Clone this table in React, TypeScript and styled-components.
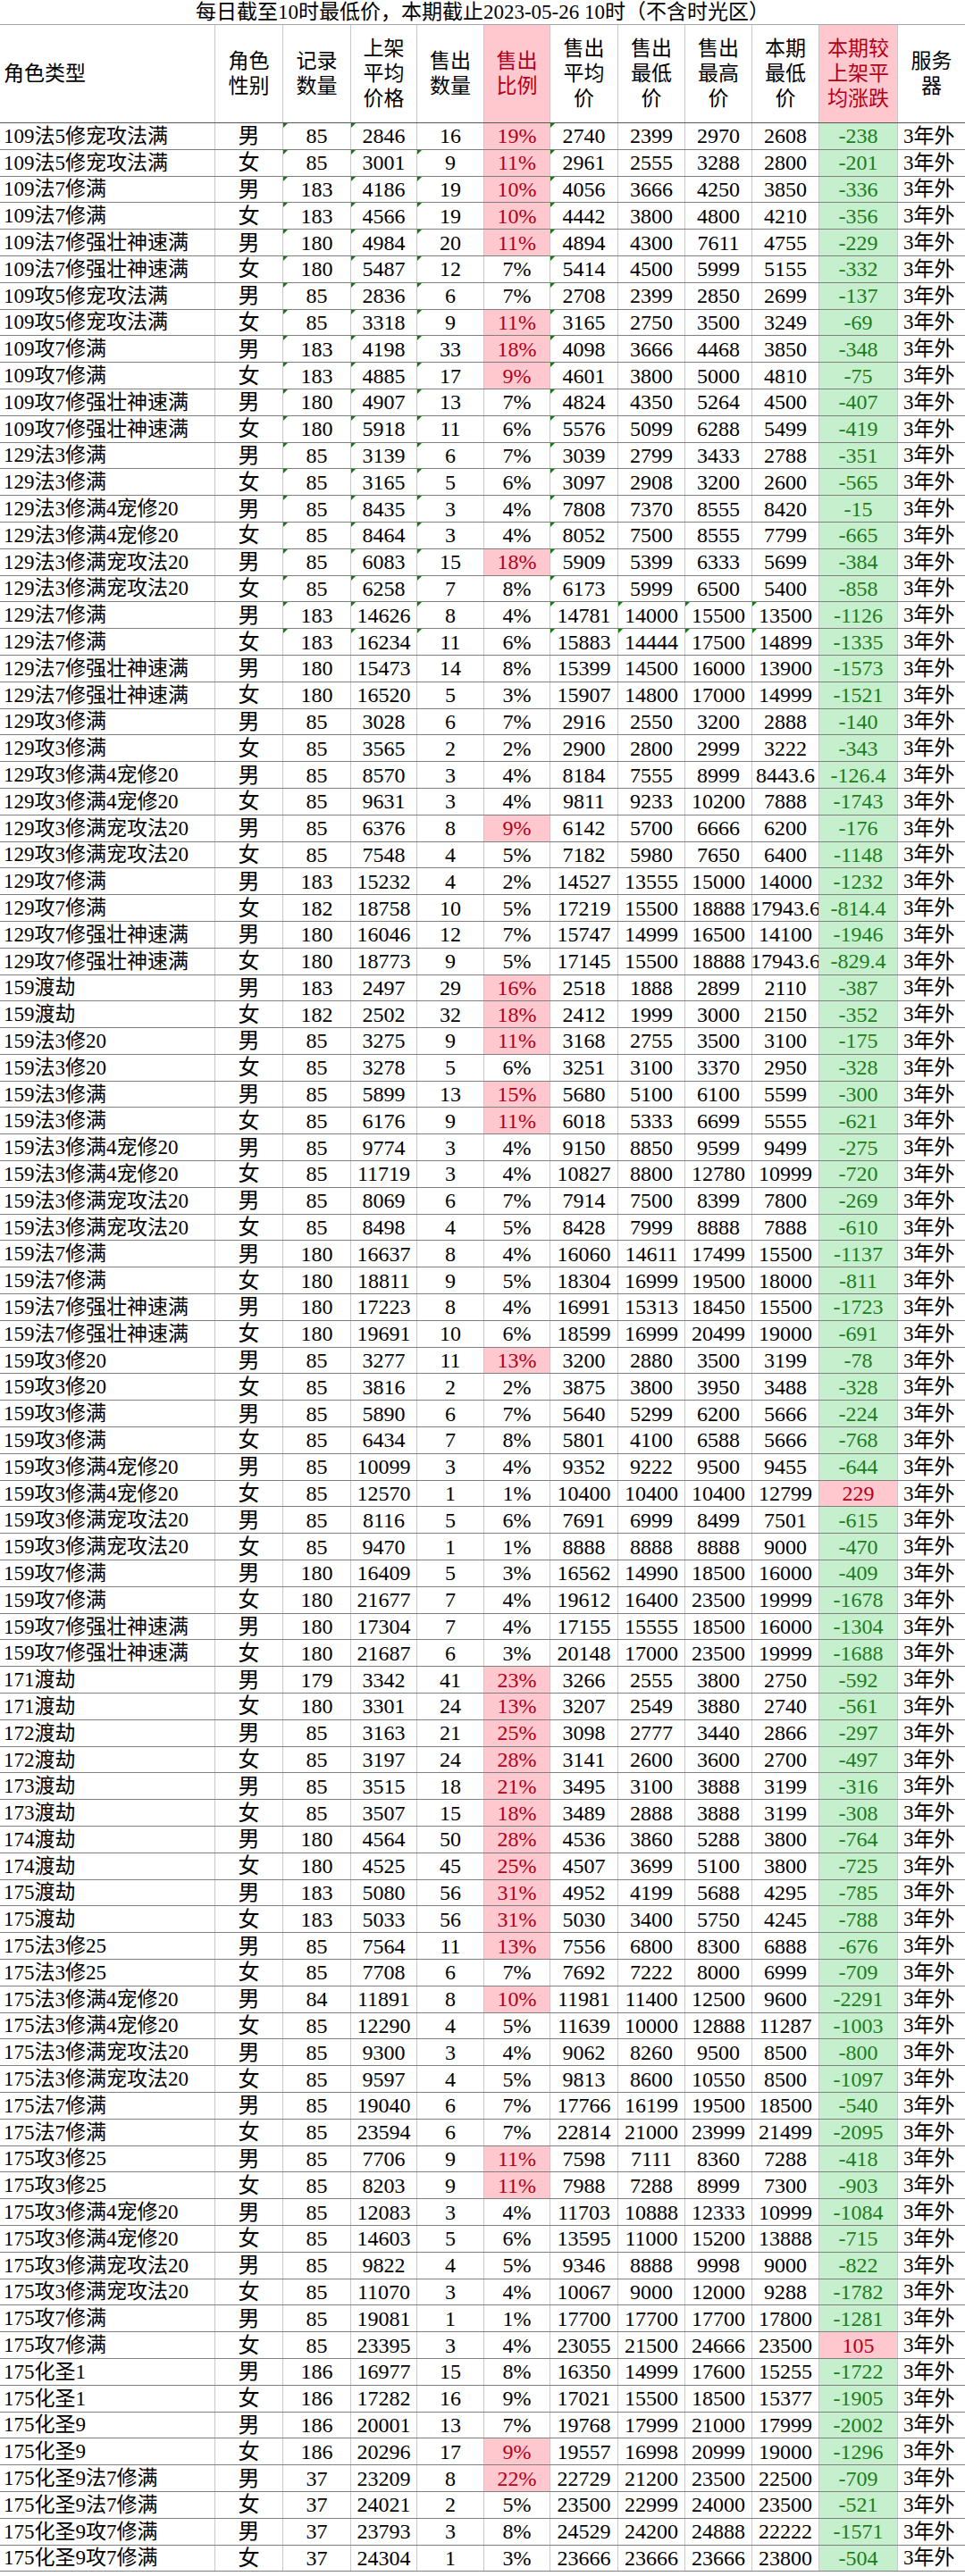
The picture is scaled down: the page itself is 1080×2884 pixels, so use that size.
import React from 'react';
import styled, { createGlobalStyle } from 'styled-components';

const GlobalStyle = createGlobalStyle`
  html, body {
    margin: 0;
    padding: 0;
    background: #ffffff;
  }
  body {
    font-family: "Liberation Serif", "Noto Sans CJK SC", serif;
    color: #000;
  }
`;

// column widths taken from the sheet's gridlines
const COLS = '241px 76px 76px 74px 75px 74px 76px 75px 75px 75px 88px 75px';

const HEADERS: { label: string; tone?: 'bad'; align?: 'left' }[] = [
  { label: '角色类型', align: 'left' },
  { label: '角色\n性别' },
  { label: '记录\n数量' },
  { label: '上架\n平均\n价格' },
  { label: '售出\n数量' },
  { label: '售出\n比例', tone: 'bad' },
  { label: '售出\n平均\n价' },
  { label: '售出\n最低\n价' },
  { label: '售出\n最高\n价' },
  { label: '本期\n最低\n价' },
  { label: '本期较\n上架平\n均涨跌', tone: 'bad' },
  { label: '服务\n器' },
];

// name|gender|rec|listAvg|sold|ratio|soldAvg|soldMin|soldMax|periodMin|change|flag
const DATA = `109法5修宠攻法满|男|85|2846|16|19%|2740|2399|2970|2608|-238|p
109法5修宠攻法满|女|85|3001|9|11%|2961|2555|3288|2800|-201|p
109法7修满|男|183|4186|19|10%|4056|3666|4250|3850|-336|p
109法7修满|女|183|4566|19|10%|4442|3800|4800|4210|-356|p
109法7修强壮神速满|男|180|4984|20|11%|4894|4300|7611|4755|-229|p
109法7修强壮神速满|女|180|5487|12|7%|5414|4500|5999|5155|-332|
109攻5修宠攻法满|男|85|2836|6|7%|2708|2399|2850|2699|-137|
109攻5修宠攻法满|女|85|3318|9|11%|3165|2750|3500|3249|-69|p
109攻7修满|男|183|4198|33|18%|4098|3666|4468|3850|-348|p
109攻7修满|女|183|4885|17|9%|4601|3800|5000|4810|-75|p
109攻7修强壮神速满|男|180|4907|13|7%|4824|4350|5264|4500|-407|
109攻7修强壮神速满|女|180|5918|11|6%|5576|5099|6288|5499|-419|
129法3修满|男|85|3139|6|7%|3039|2799|3433|2788|-351|
129法3修满|女|85|3165|5|6%|3097|2908|3200|2600|-565|
129法3修满4宠修20|男|85|8435|3|4%|7808|7370|8555|8420|-15|
129法3修满4宠修20|女|85|8464|3|4%|8052|7500|8555|7799|-665|
129法3修满宠攻法20|男|85|6083|15|18%|5909|5399|6333|5699|-384|p
129法3修满宠攻法20|女|85|6258|7|8%|6173|5999|6500|5400|-858|
129法7修满|男|183|14626|8|4%|14781|14000|15500|13500|-1126|
129法7修满|女|183|16234|11|6%|15883|14444|17500|14899|-1335|
129法7修强壮神速满|男|180|15473|14|8%|15399|14500|16000|13900|-1573|
129法7修强壮神速满|女|180|16520|5|3%|15907|14800|17000|14999|-1521|
129攻3修满|男|85|3028|6|7%|2916|2550|3200|2888|-140|
129攻3修满|女|85|3565|2|2%|2900|2800|2999|3222|-343|
129攻3修满4宠修20|男|85|8570|3|4%|8184|7555|8999|8443.6|-126.4|
129攻3修满4宠修20|女|85|9631|3|4%|9811|9233|10200|7888|-1743|
129攻3修满宠攻法20|男|85|6376|8|9%|6142|5700|6666|6200|-176|p
129攻3修满宠攻法20|女|85|7548|4|5%|7182|5980|7650|6400|-1148|
129攻7修满|男|183|15232|4|2%|14527|13555|15000|14000|-1232|
129攻7修满|女|182|18758|10|5%|17219|15500|18888|17943.6|-814.4|
129攻7修强壮神速满|男|180|16046|12|7%|15747|14999|16500|14100|-1946|
129攻7修强壮神速满|女|180|18773|9|5%|17145|15500|18888|17943.6|-829.4|
159渡劫|男|183|2497|29|16%|2518|1888|2899|2110|-387|p
159渡劫|女|182|2502|32|18%|2412|1999|3000|2150|-352|p
159法3修20|男|85|3275|9|11%|3168|2755|3500|3100|-175|p
159法3修20|女|85|3278|5|6%|3251|3100|3370|2950|-328|
159法3修满|男|85|5899|13|15%|5680|5100|6100|5599|-300|p
159法3修满|女|85|6176|9|11%|6018|5333|6699|5555|-621|p
159法3修满4宠修20|男|85|9774|3|4%|9150|8850|9599|9499|-275|
159法3修满4宠修20|女|85|11719|3|4%|10827|8800|12780|10999|-720|
159法3修满宠攻法20|男|85|8069|6|7%|7914|7500|8399|7800|-269|
159法3修满宠攻法20|女|85|8498|4|5%|8428|7999|8888|7888|-610|
159法7修满|男|180|16637|8|4%|16060|14611|17499|15500|-1137|
159法7修满|女|180|18811|9|5%|18304|16999|19500|18000|-811|
159法7修强壮神速满|男|180|17223|8|4%|16991|15313|18450|15500|-1723|
159法7修强壮神速满|女|180|19691|10|6%|18599|16999|20499|19000|-691|
159攻3修20|男|85|3277|11|13%|3200|2880|3500|3199|-78|p
159攻3修20|女|85|3816|2|2%|3875|3800|3950|3488|-328|
159攻3修满|男|85|5890|6|7%|5640|5299|6200|5666|-224|
159攻3修满|女|85|6434|7|8%|5801|4100|6588|5666|-768|
159攻3修满4宠修20|男|85|10099|3|4%|9352|9222|9500|9455|-644|
159攻3修满4宠修20|女|85|12570|1|1%|10400|10400|10400|12799|229|
159攻3修满宠攻法20|男|85|8116|5|6%|7691|6999|8499|7501|-615|
159攻3修满宠攻法20|女|85|9470|1|1%|8888|8888|8888|9000|-470|
159攻7修满|男|180|16409|5|3%|16562|14990|18500|16000|-409|
159攻7修满|女|180|21677|7|4%|19612|16400|23500|19999|-1678|
159攻7修强壮神速满|男|180|17304|7|4%|17155|15555|18500|16000|-1304|
159攻7修强壮神速满|女|180|21687|6|3%|20148|17000|23500|19999|-1688|
171渡劫|男|179|3342|41|23%|3266|2555|3800|2750|-592|p
171渡劫|女|180|3301|24|13%|3207|2549|3880|2740|-561|p
172渡劫|男|85|3163|21|25%|3098|2777|3440|2866|-297|p
172渡劫|女|85|3197|24|28%|3141|2600|3600|2700|-497|p
173渡劫|男|85|3515|18|21%|3495|3100|3888|3199|-316|p
173渡劫|女|85|3507|15|18%|3489|2888|3888|3199|-308|p
174渡劫|男|180|4564|50|28%|4536|3860|5288|3800|-764|p
174渡劫|女|180|4525|45|25%|4507|3699|5100|3800|-725|p
175渡劫|男|183|5080|56|31%|4952|4199|5688|4295|-785|p
175渡劫|女|183|5033|56|31%|5030|3400|5750|4245|-788|p
175法3修25|男|85|7564|11|13%|7556|6800|8300|6888|-676|p
175法3修25|女|85|7708|6|7%|7692|7222|8000|6999|-709|
175法3修满4宠修20|男|84|11891|8|10%|11981|11400|12500|9600|-2291|p
175法3修满4宠修20|女|85|12290|4|5%|11639|10000|12888|11287|-1003|
175法3修满宠攻法20|男|85|9300|3|4%|9062|8260|9500|8500|-800|
175法3修满宠攻法20|女|85|9597|4|5%|9813|8600|10550|8500|-1097|
175法7修满|男|85|19040|6|7%|17766|16199|19500|18500|-540|
175法7修满|女|85|23594|6|7%|22814|21000|23999|21499|-2095|
175攻3修25|男|85|7706|9|11%|7598|7111|8360|7288|-418|p
175攻3修25|女|85|8203|9|11%|7988|7288|8999|7300|-903|p
175攻3修满4宠修20|男|85|12083|3|4%|11703|10888|12333|10999|-1084|
175攻3修满4宠修20|女|85|14603|5|6%|13595|11000|15200|13888|-715|
175攻3修满宠攻法20|男|85|9822|4|5%|9346|8888|9998|9000|-822|
175攻3修满宠攻法20|女|85|11070|3|4%|10067|9000|12000|9288|-1782|
175攻7修满|男|85|19081|1|1%|17700|17700|17700|17800|-1281|
175攻7修满|女|85|23395|3|4%|23055|21500|24666|23500|105|
175化圣1|男|186|16977|15|8%|16350|14999|17600|15255|-1722|
175化圣1|女|186|17282|16|9%|17021|15500|18500|15377|-1905|
175化圣9|男|186|20001|13|7%|19768|17999|21000|17999|-2002|
175化圣9|女|186|20296|17|9%|19557|16998|20999|19000|-1296|p
175化圣9法7修满|男|37|23209|8|22%|22729|21200|23500|22500|-709|p
175化圣9法7修满|女|37|24021|2|5%|23500|22999|24000|23500|-521|
175化圣9攻7修满|男|37|23793|3|8%|24529|24200|24888|22222|-1571|
175化圣9攻7修满|女|37|24304|1|3%|23666|23666|23666|23800|-504|`
  .split('\n')
  .map((line) => line.split('|'));

// which cells carry Excel's little "number stored as text" marker
const markedCols = (row: number): number[] => {
  if (row === 0) return [2, 3, 6];
  if (row < 18) return [2, 3, 4, 6];
  if (row < 20) return [2, 3, 4, 6, 7, 8, 9];
  return [];
};

type Tone = 'plain' | 'bad' | 'good';

const Sheet = styled.div`
  width: 1080px;
`;

const Title = styled.div`
  height: 28px;
  box-sizing: border-box;
  border-bottom: 1px solid #a6a6a6;
  display: flex;
  align-items: center;
  justify-content: center;
  font-size: 23px;
  line-height: 1;
  white-space: nowrap;
`;

const HeadRow = styled.div`
  display: grid;
  grid-template-columns: ${COLS};
  height: 110px;
  box-sizing: border-box;
  border-bottom: 1px solid #595959;
`;

const HeadCell = styled.div<{ $tone?: 'bad'; $align?: 'left' }>`
  display: flex;
  align-items: center;
  justify-content: ${(p) => (p.$align === 'left' ? 'flex-start' : 'center')};
  padding-left: ${(p) => (p.$align === 'left' ? '4px' : '0')};
  border-right: 1px solid #c8c8c8;
  background: ${(p) => (p.$tone === 'bad' ? '#ffc7ce' : 'transparent')};
  color: ${(p) => (p.$tone === 'bad' ? '#b0001a' : '#000')};
  font-size: 23px;
  line-height: 28px;
  text-align: center;
  white-space: pre-line;

  &:last-child {
    border-right: none;
  }
`;

const Row = styled.div`
  display: grid;
  grid-template-columns: ${COLS};
  height: 29.8px;
  box-sizing: border-box;
  border-bottom: 1px solid #808080;
`;

const Cell = styled.div<{ $tone: Tone; $kind: 'name' | 'num' | 'server'; $mark?: boolean }>`
  position: relative;
  display: flex;
  align-items: center;
  justify-content: ${(p) => (p.$kind === 'num' ? 'center' : 'flex-start')};
  padding-left: ${(p) => (p.$kind === 'name' ? '4px' : p.$kind === 'server' ? '6px' : '0')};
  overflow: hidden;
  white-space: nowrap;
  border-right: ${(p) => (p.$kind === 'server' ? 'none' : '1px solid #c8c8c8')};
  font-size: ${(p) => (p.$kind === 'num' ? '24px' : '23px')};
  line-height: 1;
  background: ${(p) =>
    p.$tone === 'bad' ? '#ffc7ce' : p.$tone === 'good' ? '#c6efce' : 'transparent'};
  color: ${(p) =>
    p.$tone === 'bad' ? '#b0001a' : p.$tone === 'good' ? '#1c7d1c' : '#000'};

  &::before {
    content: '';
    display: ${(p) => (p.$mark ? 'block' : 'none')};
    position: absolute;
    top: 0;
    left: 0;
    border-top: 5px solid #107c10;
    border-right: 5px solid transparent;
  }
`;

const toneFor = (col: number, cells: string[]): Tone => {
  if (col === 5 && cells[11] === 'p') return 'bad';
  if (col === 10) return cells[10].startsWith('-') ? 'good' : 'bad';
  return 'plain';
};

const App = () => {
  return (
    <Sheet>
      <GlobalStyle />
      <Title>每日截至10时最低价，本期截止2023-05-26 10时（不含时光区）</Title>
      <HeadRow>
        {HEADERS.map((h) => (
          <HeadCell key={h.label} $tone={h.tone} $align={h.align}>
            {h.label}
          </HeadCell>
        ))}
      </HeadRow>
      {DATA.map((cells, r) => {
        const marks = markedCols(r);
        return (
          <Row key={r}>
            {cells.slice(0, 11).map((v, c) => (
              <Cell
                key={c}
                $tone={toneFor(c, cells)}
                $kind={c === 0 ? 'name' : 'num'}
                $mark={marks.includes(c)}
              >
                {v}
              </Cell>
            ))}
            <Cell $tone="plain" $kind="server">3年外</Cell>
          </Row>
        );
      })}
    </Sheet>
  );
};

export default App;
